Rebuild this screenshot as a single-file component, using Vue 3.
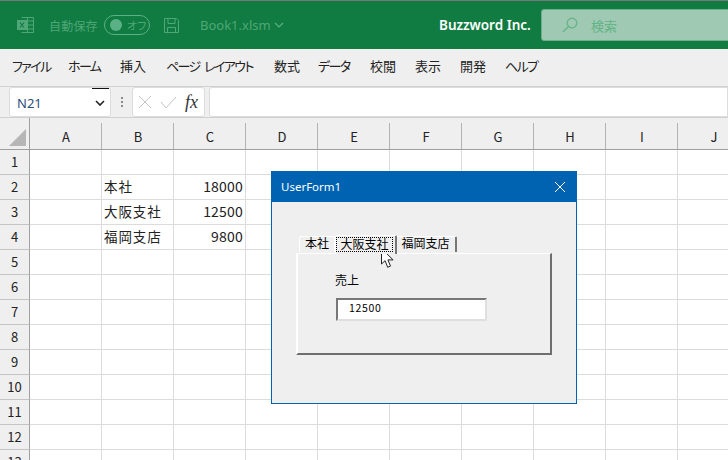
<script setup>
const menus = [
  { t: 'ファイル', w: 56, kana: true }, { t: 'ホーム', w: 52, kana: true }, { t: '挿入', w: 46 }, { t: 'ページ レイアウト', w: 108, kana: true },
  { t: '数式', w: 44 }, { t: 'データ', w: 52, kana: true }, { t: '校閲', w: 45 }, { t: '表示', w: 45 }, { t: '開発', w: 45 }, { t: 'ヘルプ', w: 40, kana: true }
]
const cols = ['A', 'B', 'C', 'D', 'E', 'F', 'G', 'H', 'I', 'J']
const cells = {
  2: { B: '本社', C: '18000' },
  3: { B: '大阪支社', C: '12500' },
  4: { B: '福岡支店', C: '9800' }
}
const rows = Array.from({ length: 13 }, (_, i) => i + 1)
const cell = (r, c) => (cells[r] && cells[r][c]) || ''
</script>

<template>
  <div class="app">
    <header class="titlebar">
      <svg class="xl" width="17" height="16" viewBox="0 0 17 16" fill="none" stroke="#4fa678" stroke-width="1">
        <path d="M4.5 0.5h12v15h-12M10.5 0.5v15M4.5 4h12M4.5 8h12M4.5 12h12" />
        <rect x="0" y="3" width="10" height="10" fill="#4fa678" stroke="none" />
        <path d="M3 5.5l4 5M7 5.5l-4 5" stroke="#107c41" stroke-width="1.2" />
      </svg>
      <span class="autosave">自動保存</span>
      <span class="toggle"><i class="knob"></i><span class="off">オフ</span></span>
      <svg class="save" width="17" height="17" viewBox="0 0 17 17" fill="none" stroke="#4fa678" stroke-width="1">
        <path d="M1.5 1.5h12l2 2v12h-14zM5 1.5v5h7v-5M4.5 15.5v-5h8v5" />
      </svg>
      <span class="book">Book1.xlsm</span>
      <svg class="chev" width="10" height="6" viewBox="0 0 10 6" fill="none" stroke="#5bb085" stroke-width="1.2">
        <path d="M1 1l4 4 4-4" />
      </svg>
      <span class="company">Buzzword Inc.</span>
      <div class="search">
        <svg width="16" height="16" viewBox="0 0 16 16" fill="none" stroke="#62b387" stroke-width="1.2">
          <circle cx="10" cy="6" r="4.8" />
          <path d="M6.5 9.5L1 15" />
        </svg>
        <span>検索</span>
      </div>
    </header>

    <nav class="menubar">
      <span v-for="m in menus" :key="m.t" class="menu" :class="{ kana: m.kana }" :style="{ width: m.w + 'px' }">{{ m.t }}</span>
    </nav>

    <div class="formula">
      <div class="namebox">
        <span>N21</span>
        <svg width="10" height="6" viewBox="0 0 10 6" fill="none" stroke="#222" stroke-width="1.6">
          <path d="M1 1l4 4 4-4" />
        </svg>
      </div>
      <div class="dots"><i></i><i></i><i></i></div>
      <div class="fxgroup">
        <svg width="14" height="14" viewBox="0 0 14 14" fill="none" stroke="#c4c4c4" stroke-width="1">
          <path d="M1 1l12 12M13 1L1 13" />
        </svg>
        <svg width="17" height="13" viewBox="0 0 17 13" fill="none" stroke="#c4c4c4" stroke-width="1">
          <path d="M1 6l5 6L16 1" />
        </svg>
        <span class="fx">fx</span>
      </div>
      <div class="input"></div>
    </div>

    <div class="sheet">
      <div class="row head">
        <div class="corner"><i></i></div>
        <div v-for="c in cols" :key="c" class="colhead">{{ c }}</div>
      </div>
      <div v-for="r in rows" :key="r" class="row">
        <div class="rowhead">{{ r }}</div>
        <div v-for="c in cols" :key="c" class="cell" :class="{ num: c === 'C' }">{{ cell(r, c) }}</div>
      </div>
    </div>

    <section class="dialog">
      <div class="dtitle">
        <span>UserForm1</span>
        <svg width="12" height="12" viewBox="0 0 12 12" fill="none" stroke="#fff" stroke-width="1">
          <path d="M1 1l10 10M11 1L1 11" />
        </svg>
      </div>
      <div class="dbody">
        <div class="tabs">
          <div class="tab first">本社</div>
          <div class="tab active"><span>大阪支社</span></div>
          <div class="tab third">福岡支店</div>
        </div>
        <div class="page">
          <div class="label">売上</div>
          <div class="textbox">12500</div>
        </div>
      </div>
    </section>

    <svg class="cursor" width="13" height="20" viewBox="0 0 13 20">
      <path d="M0.5 0.5v15.5l3.6-3.3 2.6 6.6 2.8-1.2-2.6-6.2h5.2z" fill="#fff" stroke="#222" stroke-width="1" />
    </svg>
  </div>
</template>

<style>
html, body { margin: 0; padding: 0; background: #fff; }
</style>

<style scoped>
.app {
  position: relative;
  width: 728px;
  height: 460px;
  overflow: hidden;
  background: #fff;
  font-family: "Noto Sans CJK JP", "Noto Sans", sans-serif;
  font-feature-settings: "palt";
}
.titlebar {
  box-sizing: border-box;
  height: 49px;
  background: #107c41;
  border-top: 1px solid #777;
  display: flex;
  align-items: center;
  padding-left: 17px;
  color: #4fa678;
  overflow: hidden;
}
.titlebar > * { flex: none; }
.autosave { margin-left: 15px; font-size: 12px; width: 48px; letter-spacing: .2px; white-space: nowrap; }
.toggle {
  box-sizing: border-box;
  margin-left: 7px;
  width: 46px;
  height: 20px;
  border: 1px solid #5bb085;
  border-radius: 10px;
  display: flex;
  align-items: center;
  padding-left: 5px;
}
.knob { width: 12px; height: 12px; border-radius: 50%; background: #5bb085; flex: none; }
.off { margin-left: 5px; font-size: 11px; line-height: 1; white-space: nowrap; }
.save { margin-left: 13px; }
.book { margin-left: 20px; font: 13px "Noto Sans", sans-serif; width: 68px; white-space: nowrap; }
.chev { margin-left: 6px; }
.company {
  margin-left: 155px;
  color: #fff;
  font: 600 13.5px "Noto Sans", sans-serif;
  width: 102px;
  white-space: nowrap;
}
.search {
  box-sizing: border-box;
  width: 200px;
  height: 32px;
  background: #9fc9b2;
  border: 1px solid #6fae8c;
  border-radius: 3px;
  display: flex;
  align-items: center;
  padding-left: 20px;
  color: #62b387;
  font-size: 13px;
}
.search span { margin-left: 13px; }
.menubar {
  box-sizing: border-box;
  height: 38px;
  background: #efefef;
  border-bottom: 1px solid #d0d0d0;
  display: flex;
  align-items: center;
  padding: 0 0 5px 12px;
  font-size: 13px;
  color: #222;
}
.menu { white-space: nowrap; flex: none; }
.menu.kana { letter-spacing: -1.6px; word-spacing: 3px; }
.formula {
  box-sizing: border-box;
  height: 31px;
  background: #efefef;
  border-bottom: 1px solid #d0d0d0;
  display: flex;
  align-items: stretch;
  padding-left: 9px;
}
.namebox {
  position: relative;
  box-sizing: border-box;
  width: 102px;
  height: 30px;
  background: #fff;
  border: 1px solid #dcdcdc;
  border-radius: 3px;
  display: flex;
  align-items: center;
  justify-content: space-between;
  padding: 2px 5px 0 7px;
  font: 13px "Noto Sans", sans-serif;
  color: #2a4f7a;
}
.namebox::before {
  content: "";
  position: absolute;
  right: 1px;
  top: 0;
  width: 17px;
  height: 1px;
  background: #111;
}
.dots {
  width: 21px;
  display: flex;
  flex-direction: column;
  align-items: center;
  justify-content: center;
  gap: 2px;
}
.dots i { width: 2px; height: 2px; background: #8a8a8a; }
.fxgroup {
  box-sizing: border-box;
  width: 73px;
  height: 30px;
  background: #fff;
  border: 1px solid #dcdcdc;
  border-radius: 3px;
  display: flex;
  align-items: center;
  padding-left: 5px;
}
.fxgroup svg + svg { margin-left: 8px; }
.fx {
  margin-left: 8px;
  font: italic 18px "Liberation Serif", serif;
  color: #333;
}
.input {
  box-sizing: border-box;
  margin-left: 4px;
  flex: 1;
  height: 30px;
  background: #fff;
  border: 1px solid #dcdcdc;
  border-radius: 3px 0 0 3px;
}
.sheet { display: flex; flex-direction: column; }
.row { display: flex; height: 25px; flex: none; }
.row.head { height: 32px; background: #efefef; }
.corner {
  box-sizing: border-box;
  width: 30px;
  flex: none;
  border-right: 1px solid #9f9f9f;
  border-bottom: 1px solid #9f9f9f;
  display: flex;
  align-items: flex-end;
  justify-content: flex-end;
  padding: 0 3px 3px 0;
}
.corner i {
  width: 17px;
  height: 17px;
  background: #b6b6b6;
  clip-path: polygon(100% 0, 100% 100%, 0 100%);
}
.colhead {
  position: relative;
  box-sizing: border-box;
  width: 72px;
  flex: none;
  border-bottom: 1px solid #9f9f9f;
  display: flex;
  align-items: center;
  justify-content: center;
  font-size: 13px;
  color: #222;
  padding-top: 5px;
}
.colhead::after {
  content: "";
  position: absolute;
  right: 0;
  top: 5px;
  bottom: 0;
  width: 1px;
  background: #b4b4b4;
}
.rowhead {
  box-sizing: border-box;
  width: 30px;
  flex: none;
  background: #efefef;
  border-right: 1px solid #9f9f9f;
  border-bottom: 1px solid #c4c4c4;
  font-size: 13px;
  color: #222;
  display: flex;
  align-items: center;
  justify-content: center;
  padding-bottom: 2px;
}
.cell {
  box-sizing: border-box;
  width: 72px;
  flex: none;
  border-right: 1px solid #dcdcdc;
  border-bottom: 1px solid #dcdcdc;
  font-size: 13.5px;
  letter-spacing: .9px;
  color: #222;
  display: flex;
  align-items: center;
  padding: 0 0 3px 2px;
  white-space: nowrap;
  font-feature-settings: normal;
}
.cell.num { justify-content: flex-end; padding: 0 2px 3px 0; font-size: 14px; letter-spacing: .2px; }
.dialog {
  position: absolute;
  left: 271px;
  top: 171px;
  box-sizing: border-box;
  width: 306px;
  height: 233px;
  background: #efefef;
  border: 1px solid #0063b1;
  border-top: 0;
  display: flex;
  flex-direction: column;
}
.dtitle {
  height: 31px;
  flex: none;
  background: #0063b1;
  color: #fff;
  font: 11.5px "Noto Sans", sans-serif;
  display: flex;
  align-items: center;
  justify-content: space-between;
  padding: 0 10px 0 9px;
}
.dbody { padding: 33px 0 0 24px; font-feature-settings: normal; color: #000; }
.tabs { display: flex; align-items: flex-end; height: 18px; margin-left: 3px; position: relative; z-index: 1; font-size: 12px; }
.tab {
  box-sizing: border-box;
  background: #efefef;
  border-top: 1px solid #fff;
  border-left: 1px solid #fff;
  border-right: 2px solid #777;
  border-radius: 2px 2px 0 0;
  height: 16px;
  line-height: 12px;
  text-align: center;
  white-space: nowrap;
}
.tab.first { width: 36px; border-right: 1px solid #fff; margin-bottom: 1px; }
.tab.active {
  width: 62px;
  height: 19px;
  padding: 1px 2px 2px 1px;
  margin-bottom: -1px;
}
.tab.active span {
  display: block;
  box-sizing: border-box;
  height: 15px;
  border: 1px dotted #000;
  line-height: 11px;
  margin-left: -1px;
}
.tab.third { width: 60px; margin-bottom: 1px; border-left: 0; padding-right: 1px; }
.page {
  box-sizing: border-box;
  width: 256px;
  height: 102px;
  border: 1px solid #fff;
  border-left-width: 2px;
  border-right: 2px solid #6e6e6e;
  border-bottom: 2px solid #6e6e6e;
  padding: 19px 0 0 38px;
}
.label { font-size: 12px; line-height: 14px; margin-left: -1px; }
.textbox {
  box-sizing: border-box;
  margin-top: 11px;
  width: 151px;
  height: 23px;
  background: #fff;
  border: 2px solid #dfdfdf;
  border-top-color: #777;
  border-left-color: #777;
  font: 10.5px "Noto Sans CJK JP", sans-serif;
  letter-spacing: .7px;
  line-height: 16px;
  padding-left: 11px;
}
.cursor { position: absolute; left: 381px; top: 248px; }
</style>
